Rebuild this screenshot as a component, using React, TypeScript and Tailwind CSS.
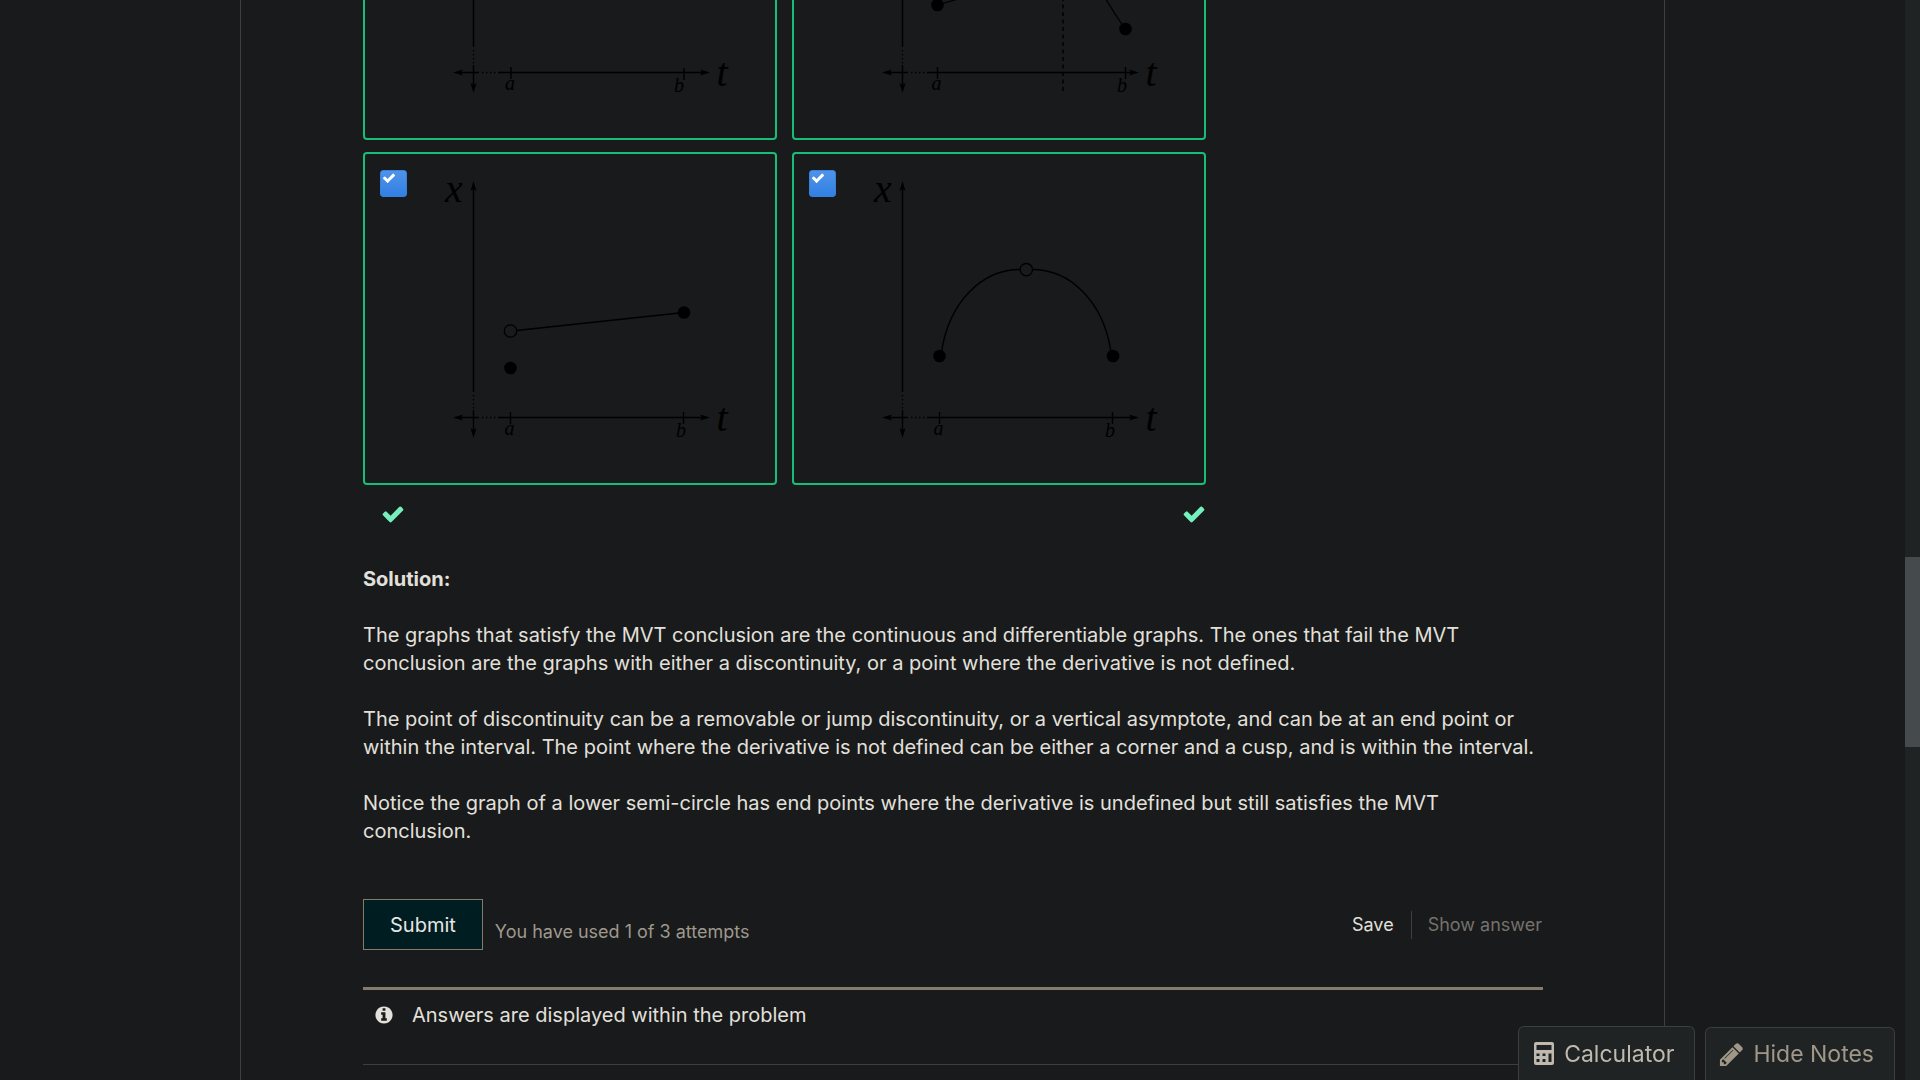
import type { ReactNode } from "react";

const CHECK =
  "M1671 566q0 40-28 68l-724 724-136 136q-28 28-68 28t-68-28l-136-136-362-362q-28-28-28-68t28-68l136-136q28-28 68-28t68 28l294 295 656-657q28-28 68-28t68 28l136 136q28 28 28 68z";
const INFO =
  "M1152 1376v-160q0-14-9-23t-23-9h-96v-512q0-14-9-23t-23-9h-320q-14 0-23 9t-9 23v160q0 14 9 23t23 9h96v320h-96q-14 0-23 9t-9 23v160q0 14 9 23t23 9h448q14 0 23-9t9-23zm-128-896v-160q0-14-9-23t-23-9h-192q-14 0-23 9t-9 23v160q0 14 9 23t23 9h192q14 0 23-9t9-23zm640 416q0 209-103 385.5t-279.5 279.5-385.5 103-385.5-103-279.5-279.5-103-385.5 103-385.5 279.5-279.5 385.5-103 385.5 103 279.5 279.5 103 385.5z";
const PENCIL =
  "M491 1536l91-91-235-235-91 91v107h128v128h107zm523-928q0-22-22-22-10 0-17 7l-542 542q-7 7-7 17 0 22 22 22 10 0 17-7l542-542q7-7 7-17zm-54-192l416 416-832 832h-416v-416zm683 96q0 53-37 90l-166 166-416-416 166-165q36-38 90-38 53 0 91 38l235 234q37 39 37 91z";

function Glyph({ d, className }: { d: string; className: string }) {
  return (
    <svg viewBox="0 0 1792 1792" fill="currentColor" aria-hidden="true" className={className}>
      <path d={d} />
    </svg>
  );
}

function CalculatorIcon() {
  return (
    <svg viewBox="0 0 20 23" aria-hidden="true" className="h-[23px] w-5">
      <path
        fill="currentColor"
        fillRule="evenodd"
        d="M2 0h16a2 2 0 0 1 2 2v19a2 2 0 0 1-2 2H2a2 2 0 0 1-2-2V2a2 2 0 0 1 2-2zM2.500 3v5h15V3zM2.500 11.500v2.500h3v-2.500zM8.500 11.500v2.500h3v-2.500zM2.500 17v3h3v-3zM8.500 17v3h3v-3zM14.500 11.500V20h3v-8.500z"
      />
    </svg>
  );
}

type GraphProps = {
  label: string;
  a: number;
  b: number;
  bLabel: number;
  tickB?: number;
  verticalLabel?: string;
  children?: ReactNode;
};

function Graph({ label, a, b, bLabel, tickB = 260, verticalLabel, children }: GraphProps) {
  return (
    <svg viewBox="0 0 414 333" role="img" aria-label={label} className="block w-full">
      <g stroke="#000" strokeWidth="1.4" fill="none">
        <path d="M110.500 34V240M110.500 258V281M95 265.500H116M135 265.500H342" />
        <path d="M110.500 243V258M119 265.500H135" strokeDasharray="1.500 2.500" />
        <path d={`M${a} 260v12M${b} ${tickB}v12`} />
      </g>
      <path d="M110.500 29l3 10-3-2-3 2zM110.500 286l3-10-3 2-3-2zM90 265.500l10-3-2 3 2 3zM347 265.500l-10-3 2 3-2 3z" />
      <g className="font-['Liberation_Serif',serif] italic" fill="#000" textAnchor="middle">
        {verticalLabel && <text x="91" y="50" fontSize="40">{verticalLabel}</text>}
        <text x="359" y="279" fontSize="40">t</text>
        <text x={a - 1} y="283" fontSize="20">a</text>
        <text x={bLabel} y="285" fontSize="20">b</text>
      </g>
      {children}
    </svg>
  );
}

function Choice({ name, children }: { name: string; children: ReactNode }) {
  return (
    <label className="relative block rounded-[4px] shadow-[inset_0_0_0_2px_#16bf78]">
      <span className="absolute top-[18px] left-[17px] block size-[27px]">
        <input
          type="checkbox"
          defaultChecked
          aria-label={name}
          className="block size-[27px] appearance-none rounded-[3px] border border-[#3a7fd8] bg-linear-to-b from-[#4f93e9] to-[#3080e4]"
        />
        <Glyph d={CHECK} className="pointer-events-none absolute top-px left-0.5 size-3.5 text-white" />
      </span>
      {children}
    </label>
  );
}

export default function App() {
  return (
    <div className="flex h-screen overflow-hidden bg-[#181a1b] font-['Inter',sans-serif] text-xl leading-7 text-[#e3e0db]">
      <div className="flex flex-1 justify-center overflow-hidden">
        <main className="h-full w-full max-w-[1425px] overflow-hidden border-x border-[#3c3f41] pr-[121px] pl-[122px]">
          <form onSubmit={(e) => e.preventDefault()}>
            <fieldset className="-mt-[193px] w-[843px]">
              <div className="grid grid-cols-2 gap-x-[15px] gap-y-3">
                <Choice name="Graph 1">
                  <Graph label="Axes x and t" a={148} b={321} bLabel={316} tickB={261} />
                </Choice>
                <Choice name="Graph 2">
                  <Graph label="Curve with a vertical asymptote" a={145.5} b={333.5} bLabel={330}>
                    <path d="M145.500 198L190 185M290 150Q310 188 333 222" fill="none" stroke="#000" strokeWidth="1.2" />
                    <path d="M271 100V284" stroke="#000" strokeWidth="1.5" strokeDasharray="4 3.500" />
                    <circle cx="145.5" cy="198" r="6.300" />
                    <circle cx="333.5" cy="222" r="6.300" />
                  </Graph>
                </Choice>
                <Choice name="Graph 3">
                  <Graph label="Line with a jump at a" a={147.5} b={320.5} bLabel={318} verticalLabel="x">
                    <path d="M153.500 178.500L321 160.500" stroke="#000" strokeWidth="1.4" />
                    <circle cx="147.5" cy="179" r="6.200" fill="none" stroke="#000" strokeWidth="1.3" />
                    <circle cx="147.5" cy="216" r="6.300" />
                    <circle cx="321" cy="160.5" r="6.300" />
                  </Graph>
                </Choice>
                <Choice name="Graph 4">
                  <Graph label="Upper semi-circle with a hole" a={147.5} b={320.5} bLabel={318} verticalLabel="x">
                    <path
                      d="M149.500 200C157 150 190 117.500 228 117.500M240.500 117.500C278.500 117.500 311.500 150 319 200"
                      fill="none"
                      stroke="#000"
                      strokeWidth="1.4"
                    />
                    <circle cx="234.3" cy="117.7" r="6.200" fill="none" stroke="#000" strokeWidth="1.3" />
                    <circle cx="147.5" cy="204" r="6.300" />
                    <circle cx="321" cy="204" r="6.300" />
                  </Graph>
                </Choice>
              </div>
              <div className="mt-[17px] flex justify-between pl-[18px] text-[#75f0bd]">
                <Glyph d={CHECK} className="size-6" />
                <Glyph d={CHECK} className="size-6" />
              </div>
            </fieldset>

            <section className="mt-[39px] flex flex-col gap-7">
              <h3 className="font-bold">Solution:</h3>
              <p>
                The graphs that satisfy the MVT conclusion are the continuous and differentiable graphs. The ones that
                fail the MVT conclusion are the graphs with either a discontinuity, or a point where the derivative is
                not defined.
              </p>
              <p>
                The point of discontinuity can be a removable or jump discontinuity, or a vertical asymptote, and can
                be at an end point or within the interval. The point where the derivative is not defined can be either
                a corner and a cusp, and is within the interval.
              </p>
              <p>
                Notice the graph of a lower semi-circle has end points where the derivative is undefined but still
                satisfies the MVT conclusion.
              </p>
            </section>

            <div className="mt-[54px] flex items-center">
              <button type="submit" className="h-[51px] border border-[#857b6d] bg-[#001e21] px-[26px] text-[#e8e6e3]">
                Submit
              </button>
              <p className="mt-3.5 ml-3 text-lg leading-7 text-[#9f988d]">You have used 1 of 3 attempts</p>
              <div className="mt-px ml-auto flex items-center text-lg leading-7">
                <button type="button" className="pr-[17px]">Save</button>
                <button type="button" disabled className="border-l border-[#3c3f41] pr-px pl-4 text-[#75716b]">
                  Show answer
                </button>
              </div>
            </div>
          </form>

          <div className="mt-[37px] flex items-center border-t-[3px] border-[#857b6d] pt-[11px] pl-[11px]">
            <Glyph d={INFO} className="size-5" />
            <p className="ml-[18px]">Answers are displayed within the problem</p>
          </div>
          <hr className="mt-[35px] border-[#3c3f41]" />
        </main>
      </div>

      <div className="fixed right-[25px] bottom-0 flex items-end gap-2.5 text-[23px]">
        <button
          type="button"
          className="flex h-[54px] items-center gap-2.5 rounded-t-md border border-b-0 border-[#3c3f41] bg-[#202324] pr-5 pl-[15px] text-[#bfb9af]"
        >
          <CalculatorIcon />
          Calculator
        </button>
        <button
          type="button"
          className="flex h-[53px] items-center gap-2 rounded-t-md border border-b-0 border-[#3c3f41] bg-[#202324] pr-5 pl-3 text-[#a09789]"
        >
          <Glyph d={PENCIL} className="size-[27px]" />
          Hide Notes
        </button>
      </div>

      <div className="w-[15px] bg-[#202324]">
        <div className="mt-[557px] h-[190px] bg-[#454a4c]" />
      </div>
    </div>
  );
}
